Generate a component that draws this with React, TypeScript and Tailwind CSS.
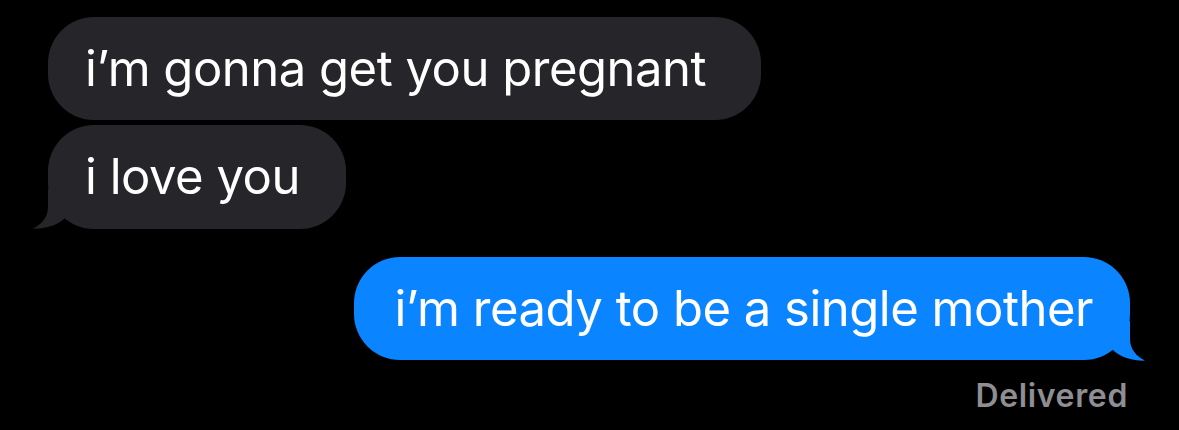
export default function App() {
  return (
    <div
      className="w-[1179px] h-[430px] bg-black overflow-hidden flex flex-col pt-[17px]"
      style={{ fontFamily: 'Inter, "Noto Sans", sans-serif' }}
    >
      <div className="flex flex-col items-start gap-[5px] pl-[48px]">
        <div className="h-[103px] rounded-[46px] bg-[#26262a] pl-[37px] pr-[55px] flex items-center text-white text-[49px] tracking-[-0.01em]">
          i’m gonna get you pregnant
        </div>
        <div className="relative h-[104px] rounded-[46px] bg-[#26262a] pl-[37px] pr-[46px] flex items-center text-white text-[49px] tracking-[-0.01em]">
          <svg className="absolute left-[-16px] bottom-0 w-[40px] h-[40px]" viewBox="0 0 40 40">
            <path d="M16,0 L16,18 C16,28 10,35 1,39.6 C12,40 24,37 32,30 L40,20 L40,0 Z" fill="#26262a" />
          </svg>
          <span className="relative">i love you</span>
        </div>
      </div>
      <div className="flex flex-col items-end pr-[49px] mt-[28px]">
        <div className="relative h-[103px] rounded-[46px] bg-[#0a84ff] pl-[40px] pr-[37px] flex items-center text-white text-[49px] tracking-[-0.01em]">
          <svg className="absolute right-[-16px] bottom-[-1px] w-[40px] h-[40px]" viewBox="0 0 40 40">
            <path d="M24,0 L24,18 C24,28 30,35 39,39.6 C28,40 16,37 8,30 L0,20 L0,0 Z" fill="#0a84ff" />
          </svg>
          <span className="relative">i’m ready to be a single mother</span>
        </div>
        <div className="mt-[17px] mr-[2px] text-[32px] leading-[38px] tracking-[0.02em] font-semibold text-[#8e8e93]">
          Delivered
        </div>
      </div>
    </div>
  );
}
